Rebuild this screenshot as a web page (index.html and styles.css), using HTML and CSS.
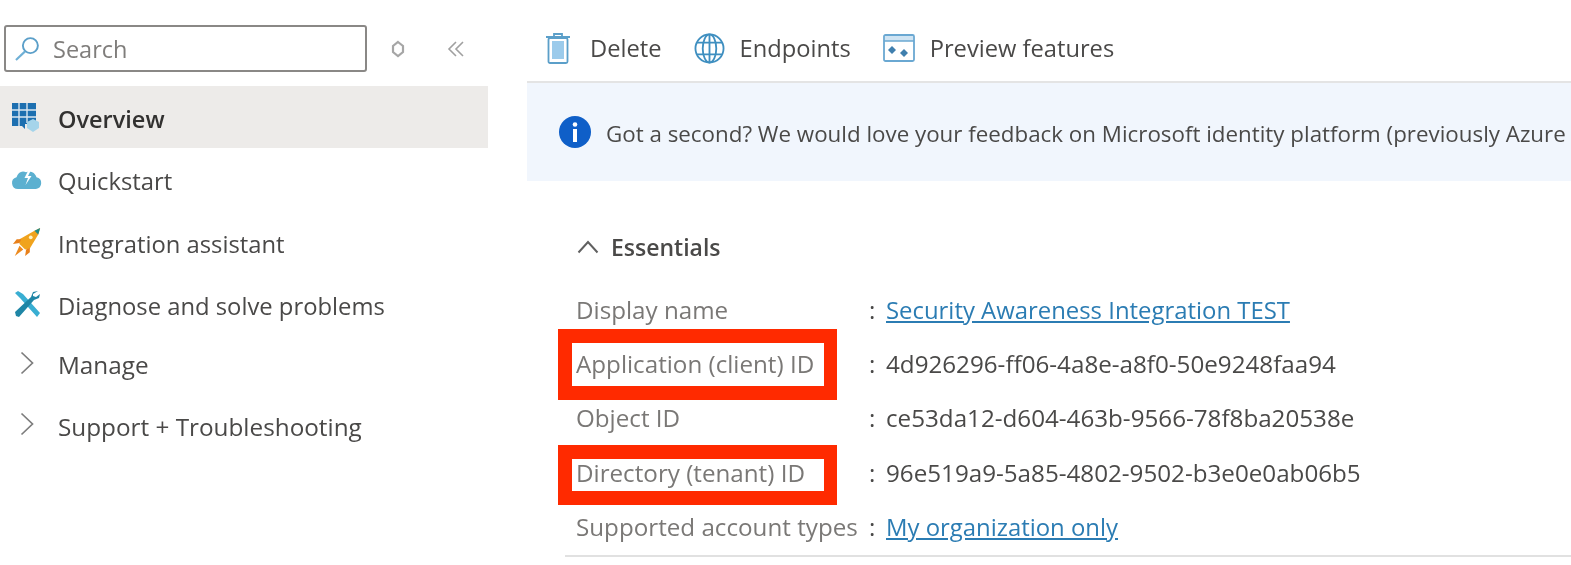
FILE: index.html
```html
<!DOCTYPE html>
<html lang="en">
<head>
<meta charset="utf-8">
<title>Overview</title>
<link rel="stylesheet" href="styles.css">
</head>
<body>
<div class="page">
  <aside class="sidebar">
    <div class="search-row">
      <div class="search-box">
        <svg class="search-icon" viewBox="0 0 26 26"><circle cx="16" cy="10" r="7.800" fill="none" stroke="#5b9fc9" stroke-width="2"/><path d="M10.500 16 1 25" stroke="#6fb0d6" stroke-width="2.200" fill="none"/></svg>
        <span class="search-text">Search</span>
      </div>
      <svg class="diamond" viewBox="0 0 14 18"><path d="M7 2 12 6v6l-5 4-5-4V6z" fill="none" stroke="#a6a6a6" stroke-width="2.200"/></svg>
      <svg class="collapse" viewBox="0 0 18 16"><path d="M9 1 2 8l7 7M16 1 9 8l7 7" fill="none" stroke="#a0a0a0" stroke-width="1.600"/></svg>
    </div>
    <nav class="nav">
      <div class="nav-item selected">
        <svg class="nav-icon" viewBox="0 0 32 30"><path d="M1 1h24v21h-11v5l-3-3H1z" fill="#1d6fb0"/><path d="M1 8h24M1 15h24M8 1v23M16 1v20" stroke="#d9e6f0" stroke-width="1.400"/><path d="M16 20l6-3 6 3v6l-6 4-6-4z" fill="#a5d4ea"/></svg>
        <span class="nav-label strong">Overview</span>
      </div>
      <div class="nav-item">
        <svg class="nav-icon" viewBox="0 0 32 30"><path d="M7 25a6 6 0 0 1-1.500-11.800c1-3.400 3.600-5.600 6.500-5.700 1.200 0 2 .3 3 .8 1.200-.6 2.400-.8 3.500-.8 3 .1 6 2.300 7 5.700A6 6 0 0 1 25 25z" fill="#5cb0d0"/><path d="M17.500 6l-4 8h3.500l-2.500 7 6-9h-3.500l3-6z" fill="#fff"/></svg>
        <span class="nav-label">Quickstart</span>
      </div>
      <div class="nav-item">
        <svg class="nav-icon" viewBox="0 0 32 32"><path d="M8 13 24 4l6-3-2 7-9 15-5 1-6-6z" fill="#f0a31d"/><path d="M24 4l6-3-2 7z" fill="#1f8a8a"/><path d="M10 13H5l-4 5 7-1zM19 22v5l-5 4 1-7z" fill="#e8801a"/><path d="M8 20l4 4-9 7z" fill="#ec8a1f"/><circle cx="20" cy="11" r="2" fill="#fff3c4"/></svg>
        <span class="nav-label">Integration assistant</span>
      </div>
      <div class="nav-item">
        <svg class="nav-icon" viewBox="-2 0 32 28"><path d="M2 3l3-2 5 3 17 19-3 4L7 8z" fill="#39aed2"/><path d="M25 1l-5 1-2 5L2 22l1 4 3 1L21 10l5-2 1-4-4 3-3-1v-2z" fill="#1f86a6"/></svg>
        <span class="nav-label">Diagnose and solve problems</span>
      </div>
      <div class="nav-item tree first-tree">
        <svg class="chev" viewBox="0 0 14 24"><path d="M1.500 1.500 12.500 12 1.500 22.500" fill="none" stroke="#7d7d7d" stroke-width="1.700"/></svg>
        <span class="nav-label">Manage</span>
      </div>
      <div class="nav-item tree">
        <svg class="chev" viewBox="0 0 14 24"><path d="M1.500 1.500 12.500 12 1.500 22.500" fill="none" stroke="#7d7d7d" stroke-width="1.700"/></svg>
        <span class="nav-label">Support + Troubleshooting</span>
      </div>
    </nav>
  </aside>
  <main class="main">
    <div class="toolbar">
      <div class="tool">
        <svg class="tool-icon trash" viewBox="0 0 26 32"><path d="M9 4V2h8v2M1 5h24" fill="none" stroke="#5b9fc9" stroke-width="1.800"/><rect x="3.500" y="6" width="19" height="25" rx="1.500" fill="#fff" stroke="#5b9fc9" stroke-width="1.800"/><rect x="7" y="9" width="12" height="18" fill="#9ccbeb"/></svg>
        <span>Delete</span>
      </div>
      <div class="tool">
        <svg class="tool-icon globe" viewBox="0 0 32 32" fill="none" stroke="#3f8fc0" stroke-width="1.900"><circle cx="16" cy="16" r="14.500"/><ellipse cx="16" cy="16" rx="7" ry="14.500"/><path d="M16 1.500v29M3 10h26M3 22h26"/></svg>
        <span>Endpoints</span>
      </div>
      <div class="tool">
        <svg class="tool-icon preview" viewBox="0 0 32 28"><rect x="1" y="1" width="30" height="26" rx="1.500" fill="#fff" stroke="#6aa8d2" stroke-width="1.800"/><rect x="2" y="2" width="28" height="5" fill="#cfe4f3"/><path d="M1 7h30" stroke="#6aa8d2" stroke-width="1.500"/><path d="M9 12l4 4-4 4-4-4zM21 15l4 4-4 4-4-4z" fill="#3f7fae"/></svg>
        <span>Preview features</span>
      </div>
    </div>
    <div class="banner">
      <svg class="info" viewBox="0 0 32 32"><circle cx="16" cy="16" r="16" fill="#0f5fc8"/><circle cx="16" cy="8.500" r="2.300" fill="#fff"/><rect x="14" y="13" width="4" height="13" fill="#fff"/></svg>
      <span class="banner-text">Got a second? We would love your feedback on Microsoft identity platform (previously Azure</span>
    </div>
    <section class="essentials">
      <div class="ess-head">
        <svg class="ess-chev" viewBox="0 0 22 14"><path d="M1.500 12.500 11 2l9.500 10.500" fill="none" stroke="#606060" stroke-width="2"/></svg>
        <span class="ess-title">Essentials</span>
      </div>
      <dl class="ess-grid">
        <dt>Display name</dt><dd><span class="colon">:</span><a class="link" href="#">Security Awareness Integration TEST</a></dd>
        <dt>Application (client) ID</dt><dd><span class="colon">:</span>4d926296-ff06-4a8e-a8f0-50e9248faa94</dd>
        <dt>Object ID</dt><dd><span class="colon">:</span>ce53da12-d604-463b-9566-78f8ba20538e</dd>
        <dt>Directory (tenant) ID</dt><dd><span class="colon">:</span>96e519a9-5a85-4802-9502-b3e0e0ab06b5</dd>
        <dt>Supported account types</dt><dd><span class="colon">:</span><a class="link" href="#">My organization only</a></dd>
      </dl>
    </section>
  </main>
  <div class="mark mark-client"></div>
  <div class="mark mark-tenant"></div>
</div>
</body>
</html>
```
FILE: styles.css
```css
* { box-sizing: border-box; }
html, body { margin: 0; padding: 0; background: #fff; }
body { font-family: "Open Sans", "Noto Sans", sans-serif; color: #3b3a39; }
.page { position: relative; width: 1571px; height: 565px; overflow: hidden; display: flex; font-size: 23.500px; }

.sidebar { width: 488px; flex: none; padding-top: 25px; filter: blur(0.5px); }
.search-row { display: flex; align-items: center; padding-left: 4px; height: 47px; }
.search-box { width: 363px; height: 47px; border: 2px solid #8a8886; border-radius: 3px; display: flex; align-items: center; padding-left: 9px; }
.search-icon { width: 25px; height: 25px; }
.search-text { margin-left: 13px; color: #7f7d7b; }
.diamond { width: 14px; height: 18px; margin-left: 24px; }
.collapse { width: 18px; height: 16px; margin-left: 42px; }

.nav { margin-top: 14px; }
.nav-item { height: 62.400px; display: flex; align-items: center; padding-left: 11px; }
.nav-item.selected { background: #edebe9; height: 62px; }
.nav-item.tree { height: 61.500px; padding-left: 20px; }
.nav-item.first-tree { margin-top: -3px; }
.nav-icon { width: 32px; height: 30px; flex: none; }
.chev { width: 14px; height: 24px; flex: none; margin-right: 24px; }
.nav-label { margin-left: 15px; padding-top: 4px; color: #4a4948; white-space: nowrap; font-size: 23.800px; }
.tree .nav-label { margin-left: 0; font-size: 24.300px; }
.nav-label.strong { color: #323130; font-weight: 600; font-size: 23.500px; }

.main { flex: 1; margin-left: 39px; min-width: 0; filter: blur(0.5px); }
.toolbar { height: 83px; border-bottom: 2px solid #e4e4e4; display: flex; align-items: center; padding-left: 18px; padding-top: 15px; gap: 32px; font-size: 23.700px; }
.tool { display: flex; align-items: center; gap: 15px; color: #4a4948; white-space: nowrap; }
.tool-icon { flex: none; }
.trash { width: 26px; height: 32px; margin-right: 4px; }
.globe { width: 31px; height: 31px; }
.preview { width: 32px; height: 28px; }

.banner { height: 98px; background: #f1f6fd; display: flex; align-items: center; padding-left: 32px; white-space: nowrap; overflow: hidden; }
.info { width: 32px; height: 32px; flex: none; }
.banner-text { margin-left: 15px; padding-top: 2px; font-size: 22.350px; color: #4a4948; }

.essentials { padding-left: 38px; }
.ess-head { display: flex; align-items: center; height: 40px; margin-top: 46px; padding-left: 12px; }
.ess-chev { width: 22px; height: 14px; }
.ess-title { margin-left: 12px; font-size: 23px; font-weight: 600; color: #4a4948; }
.ess-grid { display: grid; grid-template-columns: 293px 1fr; grid-auto-rows: 54.300px; align-items: center; margin: 15px 0 0; padding: 0 0 2px 11px; border-bottom: 2px solid #e1e1e1; width: 1006px; font-size: 24.200px; }
.ess-grid dt { color: #7a7876; white-space: nowrap; }
.ess-grid dd { margin: 0; display: flex; white-space: nowrap; color: #4a4948; }
.colon { width: 17px; flex: none; }
.link { color: #2b7cb3; text-decoration: underline; font-size: 23.900px; }

.mark { position: absolute; left: 558px; width: 279px; border: 14px solid #ff2a00; border-right-width: 13px; }
.mark-client { top: 329px; height: 71px; }
.mark-tenant { top: 445px; height: 60px; }
```
